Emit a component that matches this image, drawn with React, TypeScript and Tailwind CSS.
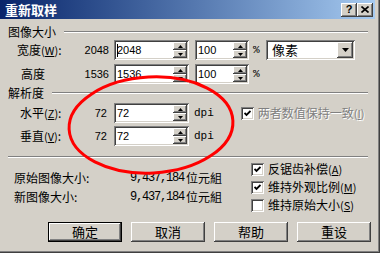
import React from 'react';

const raised =
  'bg-[#d4d0c8] shadow-[inset_-1px_-1px_#404040,inset_1px_1px_#ffffff,inset_-2px_-2px_#808080,inset_2px_2px_#d4d0c8]';
const sunken =
  'bg-white shadow-[inset_1px_1px_#808080,inset_-1px_-1px_#ffffff,inset_2px_2px_#404040,inset_-2px_-2px_#d4d0c8]';
const cjk = "font-['Noto_Sans_CJK_SC',sans-serif]";
const num = "font-['Liberation_Sans',sans-serif] text-[11px]";

function Arrow({ down = false }: { down?: boolean }) {
  return (
    <svg width="5" height="3" viewBox="0 0 5 3">
      <path d={down ? 'M0 0 L5 0 L2.5 3Z' : 'M2.5 0 L5 3 L0 3Z'} fill="#000" />
    </svg>
  );
}

function Spin() {
  return (
    <div className="flex flex-col w-[16px] h-full py-[2px] pr-[2px]">
      <div className={`${raised} flex-1 flex items-center justify-center`}>
        <Arrow />
      </div>
      <div className={`${raised} flex-1 flex items-center justify-center`}>
        <Arrow down />
      </div>
    </div>
  );
}

function Field({ value, width, caret = false }: { value: string; width: string; caret?: boolean }) {
  return (
    <div className={`${sunken} ${width} h-[20px] flex items-center`}>
      <div className={`${num} flex-1 pl-[3px] flex items-center leading-none`}>
        {caret && <span className="w-px h-[13px] bg-black -mr-px" />}
        {value}
      </div>
      <Spin />
    </div>
  );
}

function Check({ checked }: { checked: boolean }) {
  return (
    <div className={`${sunken} w-[13px] h-[13px] flex items-center justify-center shrink-0`}>
      {checked && (
        <svg width="7" height="7" viewBox="0 0 7 7">
          <path d="M0.5 3 L2.5 5 L6.5 1" stroke="#000" strokeWidth="1.8" fill="none" />
        </svg>
      )}
    </div>
  );
}

function Key({ k }: { k: string }) {
  return (
    <span className="text-[11px]">
      (<span className="underline">{k}</span>)
    </span>
  );
}

function Header({ label }: { label: string }) {
  return (
    <div className="h-[14px] flex items-center pl-[8px] pr-[12px]">
      <span className="whitespace-nowrap leading-none">{label}</span>
      <div className="flex-1 ml-[8px] h-[2px] border-t border-t-[#808080] border-b border-b-white" />
    </div>
  );
}

function Btn({ label, primary = false }: { label: string; primary?: boolean }) {
  return (
    <div className={`w-[74px] h-[20px] ${primary ? 'border border-black' : ''}`}>
      <div className={`${raised} w-full h-full flex items-center justify-center text-[13px]`}>{label}</div>
    </div>
  );
}

export default function App() {
  return (
    <div
      className={`relative w-[380px] h-[253px] bg-[#d4d0c8] overflow-hidden text-[12px] text-black ${cjk} shadow-[inset_-1px_-1px_#404040,inset_-2px_-2px_#808080]`}
    >
      <div className="w-[375px] h-[19px] bg-linear-to-r from-[#0a246a] to-[#a6caf0] flex items-center pl-[5px] pr-[2px]">
        <span className="flex-1 text-white font-bold text-[13px] leading-none">重新取样</span>
        <div className={`${raised} w-[16px] h-[14px] flex items-center justify-center font-['Liberation_Sans',sans-serif] font-bold text-[11px]`}>
          ?
        </div>
        <div className={`${raised} w-[16px] h-[14px] flex items-center justify-center`}>
          <svg width="8" height="7" viewBox="0 0 8 7">
            <path d="M0.5 0.5 L7.5 6.5 M7.5 0.5 L0.5 6.5" stroke="#000" strokeWidth="1.6" />
          </svg>
        </div>
      </div>

      <div className="mt-[6px]">
        <Header label="图像大小" />
      </div>

      <div className="mt-[1px] h-[20px] flex items-center">
        <div className="w-[65px] ml-[17px] whitespace-nowrap">
          宽度<Key k="W" />:
        </div>
        <div className={`${num} w-[27px] text-right`}>2048</div>
        <div className="ml-[5px]">
          <Field value="2048" width="w-[75px]" caret />
        </div>
        <div className="ml-[6px]">
          <Field value="100" width="w-[54px]" />
        </div>
        <div className="w-[17px] pl-[4px] font-['Liberation_Mono',monospace] text-[11px]">%</div>
        <div className={`${sunken} w-[89px] h-[20px] flex items-center`}>
          <span className="flex-1 pl-[6px] text-[13px]">像素</span>
          <div className="h-full py-[2px] pr-[2px]">
            <div className={`${raised} w-[16px] h-full flex items-center justify-center`}>
              <svg width="7" height="4" viewBox="0 0 7 4">
                <path d="M0 0 L7 0 L3.5 4Z" fill="#000" />
              </svg>
            </div>
          </div>
        </div>
      </div>

      <div className="mt-[4px] h-[20px] flex items-center">
        <div className="w-[61px] ml-[21px]">高度</div>
        <div className={`${num} w-[27px] text-right`}>1536</div>
        <div className="ml-[5px]">
          <Field value="1536" width="w-[75px]" />
        </div>
        <div className="ml-[6px]">
          <Field value="100" width="w-[54px]" />
        </div>
        <div className="w-[17px] pl-[4px] font-['Liberation_Mono',monospace] text-[11px]">%</div>
      </div>

      <div className="mt-[2px]">
        <Header label="解析度" />
      </div>

      <div className="mt-[3px] h-[20px] flex items-center">
        <div className="w-[62px] ml-[20px] whitespace-nowrap">
          水平<Key k="Z" />:
        </div>
        <div className={`${num} w-[25px] text-right`}>72</div>
        <div className="ml-[7px]">
          <Field value="72" width="w-[75px]" />
        </div>
        <div className="ml-[5px] font-['Liberation_Mono',monospace] text-[11px]">dpi</div>
        <div className="ml-[27px] flex items-center gap-[4px] whitespace-nowrap text-[#808080] [text-shadow:1px_1px_#ffffff]">
          <Check checked />
          <span>
            两者数值保持一致<Key k="I" />
          </span>
        </div>
      </div>

      <div className="mt-[3px] h-[20px] flex items-center">
        <div className="w-[62px] ml-[20px] whitespace-nowrap">
          垂直<Key k="V" />:
        </div>
        <div className={`${num} w-[25px] text-right`}>72</div>
        <div className="ml-[7px]">
          <Field value="72" width="w-[75px]" />
        </div>
        <div className="ml-[5px] font-['Liberation_Mono',monospace] text-[11px]">dpi</div>
      </div>

      <div className="mt-[10px] mx-[8px] mr-[12px] h-[2px] border-t border-t-[#808080] border-b border-b-white" />

      <div className="flex items-start">
        <div className="w-[251px] pl-[14px] pt-[10px]">
          {[
            ['原始图像大小:', '9,437,184'],
            ['新图像大小:', '9,437,184'],
          ].map(([label, value]) => (
            <div key={label} className="h-[19px] flex items-center">
              <div className="w-[116px]">{label}</div>
              <span className="font-['Liberation_Mono',monospace] text-[12px] tracking-[-1.2px]">{value}</span>
              <span className="ml-[2px]">位元組</span>
            </div>
          ))}
        </div>
        <div className="pt-[2px]">
          {[
            ['反锯齿补偿', 'A', true],
            ['维持外观比例', 'M', true],
            ['维持原始大小', 'S', false],
          ].map(([label, k, on]) => (
            <div key={label as string} className="h-[18px] flex items-center gap-[4px] whitespace-nowrap">
              <Check checked={on as boolean} />
              <span>
                {label as string}
                <Key k={k as string} />
              </span>
            </div>
          ))}
        </div>
      </div>

      <div className="mt-[8px] ml-[48px] flex gap-[9px]">
        <Btn label="确定" primary />
        <Btn label="取消" />
        <Btn label="帮助" />
        <Btn label="重设" />
      </div>

      <svg className="absolute inset-0 pointer-events-none" width="380" height="253" viewBox="0 0 380 253">
        <ellipse
          cx="151"
          cy="125"
          rx="82"
          ry="48"
          transform="rotate(-3 151 125)"
          fill="none"
          stroke="#ff0000"
          strokeWidth="3"
        />
      </svg>
    </div>
  );
}
